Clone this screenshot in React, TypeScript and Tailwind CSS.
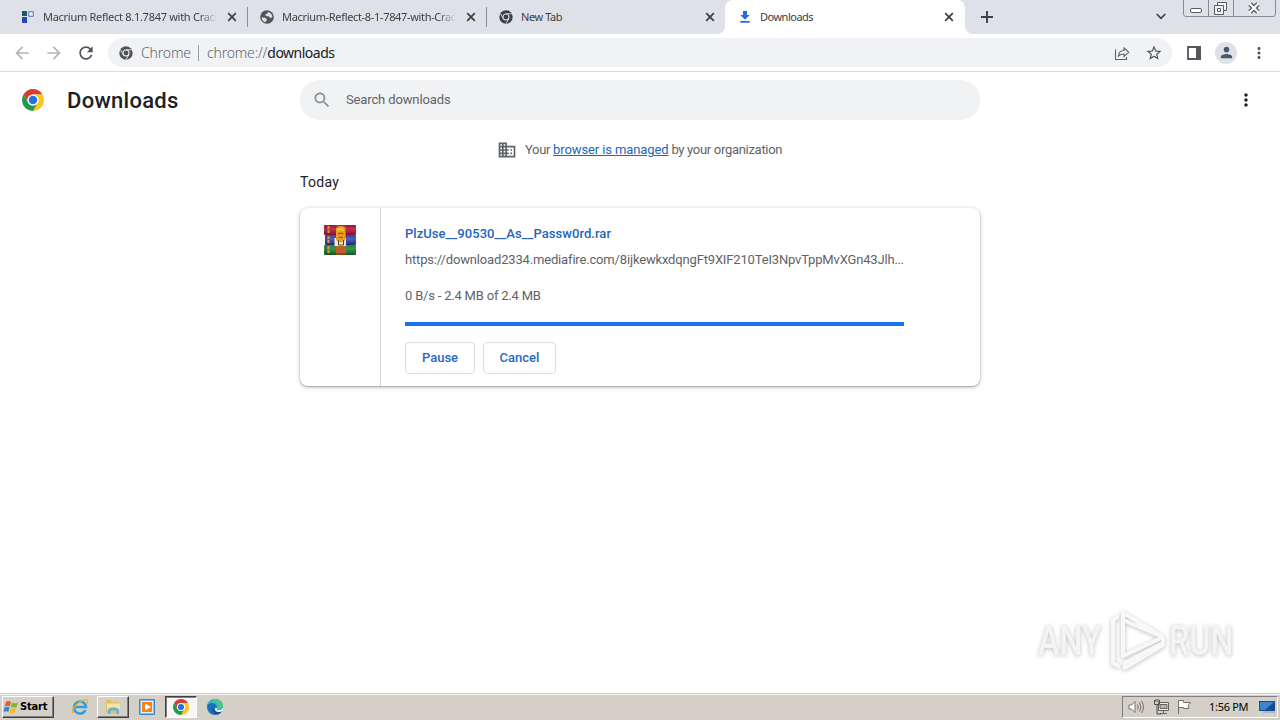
import type { ReactNode } from "react";

const ui = "font-['Noto_Sans','Open_Sans',sans-serif]";

function Icon({ d, className }: { d: string; className: string }) {
  return (
    <svg viewBox="0 0 24 24" fill="currentColor" className={`shrink-0 ${className}`}>
      <path d={d} />
    </svg>
  );
}

const paths = {
  back: "M20 11H7.83l5.59-5.59L12 4l-8 8 8 8 1.41-1.41L7.83 13H20v-2z",
  forward: "M12 4l-1.41 1.41L16.17 11H4v2h12.17l-5.58 5.59L12 20l8-8z",
  reload:
    "M17.65 6.35C16.2 4.9 14.21 4 12 4c-4.42 0-7.99 3.58-7.99 8s3.57 8 7.99 8c3.73 0 6.84-2.55 7.73-6h-2.08c-.82 2.33-3.04 4-5.65 4-3.31 0-6-2.69-6-6s2.69-6 6-6c1.66 0 3.14.69 4.22 1.78L13 11h7V4l-2.35 2.35z",
  star: "M22 9.24l-7.19-.62L12 2 9.19 8.63 2 9.24l5.46 4.73L5.82 21 12 17.27 18.18 21l-1.63-7.03L22 9.24zM12 15.4l-3.76 2.27 1-4.28-3.32-2.88 4.38-.38L12 6.1l1.71 4.04 4.38.38-3.32 2.88 1 4.28L12 15.4z",
  person: "M12 12c2.21 0 4-1.79 4-4s-1.79-4-4-4-4 1.79-4 4 1.79 4 4 4zm0 2c-2.67 0-8 1.34-8 4v2h16v-2c0-2.66-5.33-4-8-4z",
  more: "M12 8c1.1 0 2-.9 2-2s-.9-2-2-2-2 .9-2 2 .9 2 2 2zm0 2c-1.1 0-2 .9-2 2s.9 2 2 2 2-.9 2-2-.9-2-2-2zm0 6c-1.1 0-2 .9-2 2s.9 2 2 2 2-.9 2-2-.9-2-2-2z",
  search:
    "M15.5 14h-.79l-.28-.27C15.41 12.59 16 11.11 16 9.5 16 5.91 13.09 3 9.5 3S3 5.91 3 9.5 5.91 16 9.5 16c1.61 0 3.09-.59 4.23-1.57l.27.28v.79l5 4.99L20.49 19l-4.99-5zm-6 0C7.01 14 5 11.99 5 9.5S7.01 5 9.5 5 14 7.01 14 9.5 11.99 14 9.5 14z",
  domain:
    "M12 7V3H2v18h20V7H12zM6 19H4v-2h2v2zm0-4H4v-2h2v2zm0-4H4V9h2v2zm0-4H4V5h2v2zm4 12H8v-2h2v2zm0-4H8v-2h2v2zm0-4H8V9h2v2zm0-4H8V5h2v2zm10 12h-8v-2h2v-2h-2v-2h2v-2h-2V9h8v10zm-2-8h-2v2h2v-2zm0 4h-2v2h2v-2z",
  download: "M19 9h-4V3H9v6H5l7 7 7-7zM5 18v2.5h14V18H5z",
};

const red = "M24 12H44.78A24 24 0 0 0 3.22 12L13.61 30A12 12 0 0 1 24 12Z";
const yellow = "M34.39 30L24 48A24 24 0 0 0 44.78 12H24A12 12 0 0 1 34.39 30Z";
const green = "M13.61 30L3.22 12A24 24 0 0 0 24 48L34.39 30A12 12 0 0 1 13.61 30Z";

function ChromeLogo({ className }: { className: string }) {
  return (
    <svg viewBox="0 0 48 48" className={`shrink-0 ${className}`}>
      <circle cx="24" cy="24" r="13" fill="#fff" />
      <path d={red} fill="#dc3b32" />
      <path d={yellow} fill="#fcc61c" />
      <path d={green} fill="#23994b" />
      <circle cx="24" cy="24" r="12" fill="#fff" />
      <circle cx="24" cy="24" r="9.3" fill="#2373e8" />
    </svg>
  );
}

function ChromeMono({ className, gap }: { className: string; gap: string }) {
  return (
    <svg viewBox="0 0 48 48" className={`shrink-0 ${className}`}>
      <circle cx="24" cy="24" r="23" fill="currentColor" />
      <path d="M24 13H44M14.5 29.5L4.5 12M33.5 29.5L24 47" stroke={gap} strokeWidth="3" />
      <circle cx="24" cy="24" r="12" fill={gap} />
      <circle cx="24" cy="24" r="8.5" fill="currentColor" />
    </svg>
  );
}

function Globe() {
  return (
    <svg viewBox="0 0 16 16" className="size-[14px] shrink-0">
      <circle cx="8" cy="8" r="7.8" fill="#50555c" />
      <path d="M1.800 8.500l4 .3 2 1.700v1.500l-1.300.8v1.300C3.500 13.500 1.800 11 1.800 8.500zM9 2.200C12 2.600 14 5 14.200 8l-1.700 1-1.500-.3-1-1.700H7.500L6 5.700l1-1.500h1.500z" fill="#dee1e8" />
    </svg>
  );
}

function Close() {
  return (
    <svg viewBox="0 0 10 10" className="size-[10px] shrink-0 text-[#3c4043]">
      <path d="M1.200 1.200l7.600 7.600M8.800 1.200L1.200 8.800" stroke="currentColor" strokeWidth="1.700" />
    </svg>
  );
}

function Fade({ children, width }: { children: ReactNode; width: string }) {
  return (
    <span
      className={`overflow-hidden whitespace-nowrap [mask-image:linear-gradient(to_right,black_calc(100%-18px),transparent)] ${width}`}
    >
      {children}
    </span>
  );
}

function TabStrip() {
  return (
    <div className={`flex h-[34px] bg-[#dee1e8] text-[11px] text-[#3c4043] ${ui}`}>
      <div className="flex w-[247px] items-center pl-[21px]">
        <svg viewBox="0 0 14 14" className="mr-[8px] size-[14px] shrink-0">
          <path d="M1 1h5v5H1z" fill="#1d5962" />
          <path d="M1 7h5v6H1z" fill="#234aa5" />
          <path d="M7.700 1.700h4.600v4.600H7.700z" fill="#e8edff" stroke="#5972c5" />
        </svg>
        <Fade width="w-[174px] tracking-[-0.28px]">Macrium Reflect 8.1.7847 with Crack</Fade>
        <span className="ml-[10px]"><Close /></span>
      </div>
      <div className="flex w-[239px] items-center">
        <span className="mr-[12px] h-5 w-px bg-[#8b8f96]" />
        <Globe />
        <Fade width="ml-[8px] w-[174px] tracking-[-0.33px]">Macrium-Reflect-8-1-7847-with-Crack</Fade>
        <span className="ml-[10px]"><Close /></span>
      </div>
      <div className="flex w-[239px] items-center rounded-br-lg">
        <span className="mr-[12px] h-5 w-px bg-[#8b8f96]" />
        <ChromeMono className="size-[14px] text-[#3b4048]" gap="#dee1e8" />
        <span className="ml-[8px] flex-1 tracking-[-0.4px]">New Tab</span>
        <span className="mr-[10px]"><Close /></span>
      </div>
      <div className="relative flex w-[240px] items-center rounded-t-lg bg-white pl-[12px]">
        <svg viewBox="0 0 8 8" className="absolute bottom-0 -left-2 size-2"><path d="M8 0v8H0a8 8 0 0 0 8-8z" fill="#fff" /></svg>
        <svg viewBox="0 0 8 8" className="absolute -right-2 bottom-0 size-2"><path d="M0 0v8h8a8 8 0 0 1-8-8z" fill="#fff" /></svg>
        <Icon d={paths.download} className="size-[16px] text-[#1f6fdc]" />
        <span className="ml-[7px] flex-1 tracking-[-0.5px]">Downloads</span>
        <span className="mr-[11px]"><Close /></span>
      </div>
      <svg viewBox="0 0 12 12" className="mt-[11px] ml-[16px] size-3">
        <path d="M6 0v12M0 6h12" stroke="#3c4043" strokeWidth="1.900" />
      </svg>
      <svg viewBox="0 0 10 7" className="mt-[13px] ml-[163px] h-[7px] w-[10px]">
        <path d="M.7 1L5 5.300 9.300 1" stroke="#3c4043" strokeWidth="1.700" fill="none" />
      </svg>
      <svg viewBox="0 0 93 17" className="ml-[17px] h-[17px] w-[93px]" fill="none">
        <path d="M.5 0v14q0 2.500 2.500 2.500h87q2.500 0 2.500-2.500V0M25.500 0v16.500M50.500 0v16.500" stroke="#858b94" />
        <rect x="7.500" y="8.500" width="11" height="4" rx="1.500" fill="#fff" stroke="#555c65" />
        <path d="M34.500 2.500h9v8h-3v4h-9v-9h3z" fill="#f3f5f8" stroke="#555c65" />
        <path d="M34.500 5.500h6v5M34.500 8.500h3v3h-3z" stroke="#555c65" />
        <path d="M67 4l8 8M75 4l-8 8" stroke="#555c65" strokeWidth="4.600" />
        <path d="M66.500 3.500l9 9M75.500 3.500l-9 9" stroke="#fff" strokeWidth="2.200" />
      </svg>
    </div>
  );
}

function Toolbar() {
  return (
    <div className="flex h-[38px] items-center border-b border-[#dadce0] bg-white text-[#50545a]">
      <Icon d={paths.back} className="ml-[12px] size-5 text-[#b2b4b7]" />
      <Icon d={paths.forward} className="ml-[12px] size-5 text-[#b2b4b7]" />
      <Icon d={paths.reload} className="ml-[12px] size-5" />
      <div className={`ml-[12px] flex h-[29px] w-[1064px] items-center rounded-full bg-[#f0f2f5] pr-[9px] pl-[11px] text-[14px] font-light text-[#62666b] ${ui}`}>
        <ChromeMono className="size-[14px] text-[#50545a]" gap="#f0f2f5" />
        <span className="ml-[8px] w-[50px] whitespace-nowrap tracking-[-0.15px]">Chrome</span>
        <span className="mx-[7px] h-4 w-px shrink-0 bg-[#9a9da1]" />
        <span className="ml-px flex-1 whitespace-nowrap tracking-[-0.18px]">
          chrome://<span className="font-normal tracking-[-0.5px] text-[#202124]">downloads</span>
        </span>
        <svg viewBox="0 0 16 16" className="mr-[15px] size-4" fill="none" stroke="#5f6368" strokeWidth="1.100">
          <path d="M1.500 4.500v10h11V12M4.500 11c.2-3.600 2-5.400 5.500-5.500V3l4.800 4.300-4.800 4.200V9C7.500 9 6 9.500 4.500 11z" />
        </svg>
        <Icon d={paths.star} className="size-[18px] text-[#50545a]" />
      </div>
      <svg viewBox="0 0 14 14" className="ml-[15px] h-[14px] w-[14px] shrink-0">
        <path d="M1 1h12v12H1z" fill="#fff" stroke="#54575c" strokeWidth="1.800" />
        <path d="M9 0h5v14H9z" fill="#54575c" />
      </svg>
      <span className="ml-[14px] flex size-[22px] shrink-0 items-center justify-center rounded-full bg-[#dee1e6]">
        <Icon d={paths.person} className="size-[17px] text-[#4c5970]" />
      </span>
      <Icon d={paths.more} className="ml-[13px] size-[18px]" />
    </div>
  );
}

function Archive() {
  return (
    <svg viewBox="0 0 32 32" className="size-8">
      <defs>
        <linearGradient id="r" x2="0" y2="1"><stop stopColor="#8f1736" /><stop offset=".4" stopColor="#d02d50" /><stop offset="1" stopColor="#79142d" /></linearGradient>
        <linearGradient id="b" x2="0" y2="1"><stop stopColor="#3e3f96" /><stop offset=".4" stopColor="#4a60c5" /><stop offset="1" stopColor="#27286f" /></linearGradient>
        <linearGradient id="g" x2="0" y2="1"><stop stopColor="#2b8244" /><stop offset=".4" stopColor="#339949" /><stop offset="1" stopColor="#125421" /></linearGradient>
      </defs>
      <rect y="1" width="32" height="10" rx="1" fill="url(#r)" />
      <rect x="1" y="11" width="31" height="10" rx="1" fill="url(#b)" />
      <rect y="21" width="32" height="10" rx="1" fill="url(#g)" />
      <path d="M4.500 2v8M4.500 12v8M4.500 22v8" stroke="#d89a45" strokeWidth="2" strokeDasharray="3 1" />
      <path d="M2 2v8M2 12v8M2 22v8" stroke="#28334c" opacity=".6" />
      <path d="M12 1h10v30H12z" fill="#96451b" />
      <path d="M12 22h10v7H12z" fill="#b86128" />
      <path d="M10.500 14H22v8H10.500z" fill="#f0e9dc" />
      <path d="M12 4q5-4 9.500 0v12q-4.500 5-9.500 0z" fill="#ed9f20" />
      <path d="M13.500 6.500q3-3 6 0" fill="none" stroke="#f9cb5b" strokeWidth="1.500" />
      <path d="M14 9.500h5.500M14.500 13.500h4.500" stroke="#a85c12" strokeWidth="1.500" />
      <path d="M14.500 16v5h5v-5" fill="none" stroke="#533a2b" />
    </svg>
  );
}

function DownloadsPage() {
  return (
    <main className="flex-1 bg-white font-[Roboto,sans-serif] text-[13px]">
      <header className="flex h-14 items-center">
        <ChromeLogo className="ml-[22px] size-[22px]" />
        <h1 className="ml-[22px] w-[234px] pl-px text-[22px] font-medium tracking-[0.27px] text-[#202124]">Downloads</h1>
        <div className="flex h-10 w-[680px] items-center rounded-full bg-[#f0f2f4] pl-[12px]">
          <Icon d={paths.search} className="size-5 text-[#8b8e91]" />
          <span className="ml-[14px] tracking-[-0.13px] text-[#5f6368]">Search downloads</span>
        </div>
        <Icon d={paths.more} className="ml-[256px] size-5 text-[#202124]" />
      </header>
      <div className="mt-[12px] flex h-5 items-center text-[#5f6368]">
        <Icon d={paths.domain} className="ml-[497px] size-5" />
        <p className="ml-[8px] whitespace-nowrap tracking-[-0.3px]">
          Your <a className="tracking-[-0.11px] text-[#2465b8] underline">browser is managed</a> by your organization
        </p>
      </div>
      <div className="ml-[300px] w-[680px]">
        <h2 className="mt-[12px] h-5 text-[14px] leading-5 tracking-[0.3px] text-[#202124]">Today</h2>
        <section className="mt-[16px] flex h-[178px] rounded-lg bg-white shadow-[0_1px_2px_rgba(60,64,67,.4),0_1px_4px_1px_rgba(60,64,67,.16)]">
          <div className="flex w-[81px] justify-center border-r border-[#d4d5d7] pt-4"><Archive /></div>
          <div className="ml-[24px] w-[499px] pt-[16px]">
            <a className="block h-5 leading-5 font-medium tracking-[0.05px] text-[#2465bf]">PlzUse__90530__As__Passw0rd.rar</a>
            <p className="mt-[6px] h-5 leading-5 tracking-[-0.165px] whitespace-nowrap text-[#5f6368]">
              https://download2334.mediafire.com/8ijkewkxdqngFt9XIF210TeI3NpvTppMvXGn43Jlh
              <span className="tracking-[-0.4px]">...</span>
            </p>
            <p className="mt-[16px] h-5 leading-5 tracking-[-0.2px] text-[#5f6368]">0 B/s - 2.4 MB of 2.4 MB</p>
            <div className="mt-[16px] h-1 bg-[#1a73e8]" />
            <div className="mt-[16px] flex gap-2 font-medium text-[#2869bd]">
              <button className="h-8 w-[70px] rounded border border-[#dadce0]">Pause</button>
              <button className="h-8 w-[73px] rounded border border-[#dadce0]">Cancel</button>
            </div>
          </div>
        </section>
      </div>
    </main>
  );
}

function Watermark() {
  return (
    <div className="absolute top-[608px] left-[1038px] flex h-16 items-center font-['Roboto',sans-serif] text-[43px] leading-none font-medium text-[#f4f4f4] [filter:drop-shadow(0_1px_2px_rgba(0,0,0,.25))]">
      <span className="w-[66px] origin-left scale-x-[0.75]">ANY</span>
      <svg viewBox="0 0 60 64" className="h-16 w-[62px] shrink-0" fill="none" stroke="#f8f8f8" strokeWidth="4" strokeLinejoin="round" strokeLinecap="round">
        <path d="M12 9l-4 3v43l5 3M18 48V5l40 24-40-17M18 48l40-19v6L20 55v5l38-23" />
      </svg>
      <span className="ml-[3px] w-[66px] origin-left scale-x-[0.75]">RUN</span>
    </div>
  );
}

function EdgeLogo() {
  return (
    <svg viewBox="0 0 16 16" className="size-4">
      <circle cx="8" cy="8" r="8" fill="#1873b8" />
      <path d="M.2 7C1 2.500 4 0 8 0c5 0 8 3.500 8 6.500 0 2.500-2 4.500-4.500 4.500-1.500 0-2.300-.6-1.700-1.400C11 7 8.500 4 5 4 2.500 4 .8 5.200.2 7z" fill="#3cb9c9" />
      <path d="M8 0c5 0 8 3.500 8 6.500 0 2.500-2 4.500-4.500 4.500-1.500 0-2.300-.6-1.700-1.400C11.500 6 10 3 5 1q1.500-1 3-1z" fill="#55c875" opacity=".7" />
      <path d="M6 7c-2 4 .5 8.500 5 8.300 2-.8 3.500-2 4.300-3.600C11 14 6 12 6 7z" fill="#174d99" />
      <path d="M9.800 9.600c-.8 1 1 1.800 3 1.400 1.500-.3 2.600-1.100 3.200-2.500v3c-3 2.500-8.500 2-8-1.500.2-1.700 1.700-2.200 1.800-.4z" fill="#e9f1f3" />
    </svg>
  );
}

function Taskbar() {
  return (
    <footer className={`flex h-[27px] items-center bg-[#d4d0c8] shadow-[inset_0_1px_0_#c9c6bf,inset_0_2px_0_#f8f7f4] ${ui}`}>
      <button className="mt-px ml-[2px] flex h-[22px] w-[52px] items-center border border-t-white border-r-[#404040] border-b-[#404040] border-l-white font-['DejaVu_Sans_Condensed','DejaVu_Sans',sans-serif] text-[11px] font-bold tracking-[-0.15px] text-black shadow-[inset_-1px_-1px_0_#808080]">
        <svg viewBox="0 0 16 16" className="mr-px size-4 shrink-0">
          <path d="M3 3q2.500-2 5 0L6.800 7.500q-2.500-1.500-5 0z" fill="#e95b2b" />
          <path d="M9 3.500q3 1.500 6 0L13.500 8q-3 1.200-5.700-.1z" fill="#77b936" />
          <path d="M1.500 8.500q2.500-1.500 5 0L5.300 13q-2.500-1.500-5 0z" fill="#3487ce" />
          <path d="M7.500 9q3 1.300 5.800 0L12 13.500q-3 1.500-5.700 0z" fill="#f4bd28" />
        </svg>
        Start
      </button>
      <svg viewBox="0 0 18 18" className="ml-[17px] size-[18px]" fill="none">
        <path d="M14.500 12A6 6 0 1 1 15 9H4" stroke="#329ee1" strokeWidth="2.500" />
        <path d="M2 15C-1 12 9 1 16 2c1 0 1 2-.5 4" stroke="#e3b52c" strokeWidth="1.300" />
      </svg>
      <span className="mt-px ml-[8px] flex h-[22px] w-[32px] items-center justify-center border border-t-white border-r-[#404040] border-b-[#404040] border-l-white shadow-[inset_-1px_-1px_0_#808080]">
        <svg viewBox="0 0 16 16" className="size-4">
          <path d="M1 3V1h5l1 2h7v11H1z" fill="#e0bf68" />
          <path d="M2 4.500h13V11H2z" fill="#f8e5a0" />
          <path d="M3 15V10q5-3.500 11 0v5h-2.500v-3.500h-6V15z" fill="#65b4dc" />
        </svg>
      </span>
      <svg viewBox="0 0 16 16" className="ml-[10px] size-4">
        <path d="M.5.5h15v15H.5z" fill="#82bce7" stroke="#4186bd" />
        <path d="M2 2h12v12H2z" fill="#e8edf0" />
        <path d="M3 3h10v10H3z" fill="#f08420" />
        <path d="M6 4.500v7L12 8z" fill="#fff" />
      </svg>
      <span className="mt-px ml-[10px] flex h-[22px] w-[32px] items-center justify-center border border-t-[#404040] border-r-white border-b-white border-l-[#404040] bg-[#f8f7f5] shadow-[inset_1px_1px_0_#808080]">
        <ChromeLogo className="size-4" />
      </span>
      <span className="ml-[10px]"><EdgeLogo /></span>
      <div className="mt-px mr-[2px] ml-auto flex h-[22px] w-[156px] items-center border border-t-[#808080] border-r-white border-b-white border-l-[#808080] pl-[5px] text-[11px] text-black">
        <svg viewBox="0 0 17 16" className="h-4 w-[17px]" fill="none" stroke="#74746f">
          <path d="M1 6h2.500L7 2.500v11L3.500 10H1z" fill="#fff" />
          <path d="M9.500 5.500q1.500 2.500 0 5M11.500 3.500q3 4.500 0 9M13.500 2q4 6 0 12" />
        </svg>
        <svg viewBox="0 0 16 16" className="ml-[8px] size-4" fill="none" stroke="#64645f">
          <path d="M5.500 3.500h10v8h-10zM7 14.500h7M10.500 12v2" fill="#eee" />
          <path d="M1.500 1v4.500h5V1M3 0v3M5 0v3M4 6v9h4" stroke="#4d4d49" />
          <path d="M7 5.500h7v4H7z" fill="#b6b4b0" />
        </svg>
        <svg viewBox="0 0 16 16" className="ml-[7px] size-4" fill="#fff" stroke="#74746f">
          <path d="M2.500 15V1.500h5v2h7l-2.500 3 1 3H7.500v-1h-5" />
        </svg>
        <span className="ml-[17px] w-[40px] whitespace-nowrap tracking-[-0.3px]">1:56 PM</span>
        <svg viewBox="0 0 16 14" className="ml-[10px] h-[14px] w-4 shrink-0">
          <path d="M0 1h16v10H0z" fill="#174b95" />
          <path d="M1 2h14L6 10H1z" fill="#3b84ce" />
          <path d="M4 11h12v2H4z" fill="#a7b8c7" />
        </svg>
      </div>
    </footer>
  );
}

export default function App() {
  return (
    <div className="relative flex h-[720px] w-[1280px] flex-col overflow-hidden bg-white">
      <TabStrip />
      <Toolbar />
      <DownloadsPage />
      <Taskbar />
      <Watermark />
    </div>
  );
}
